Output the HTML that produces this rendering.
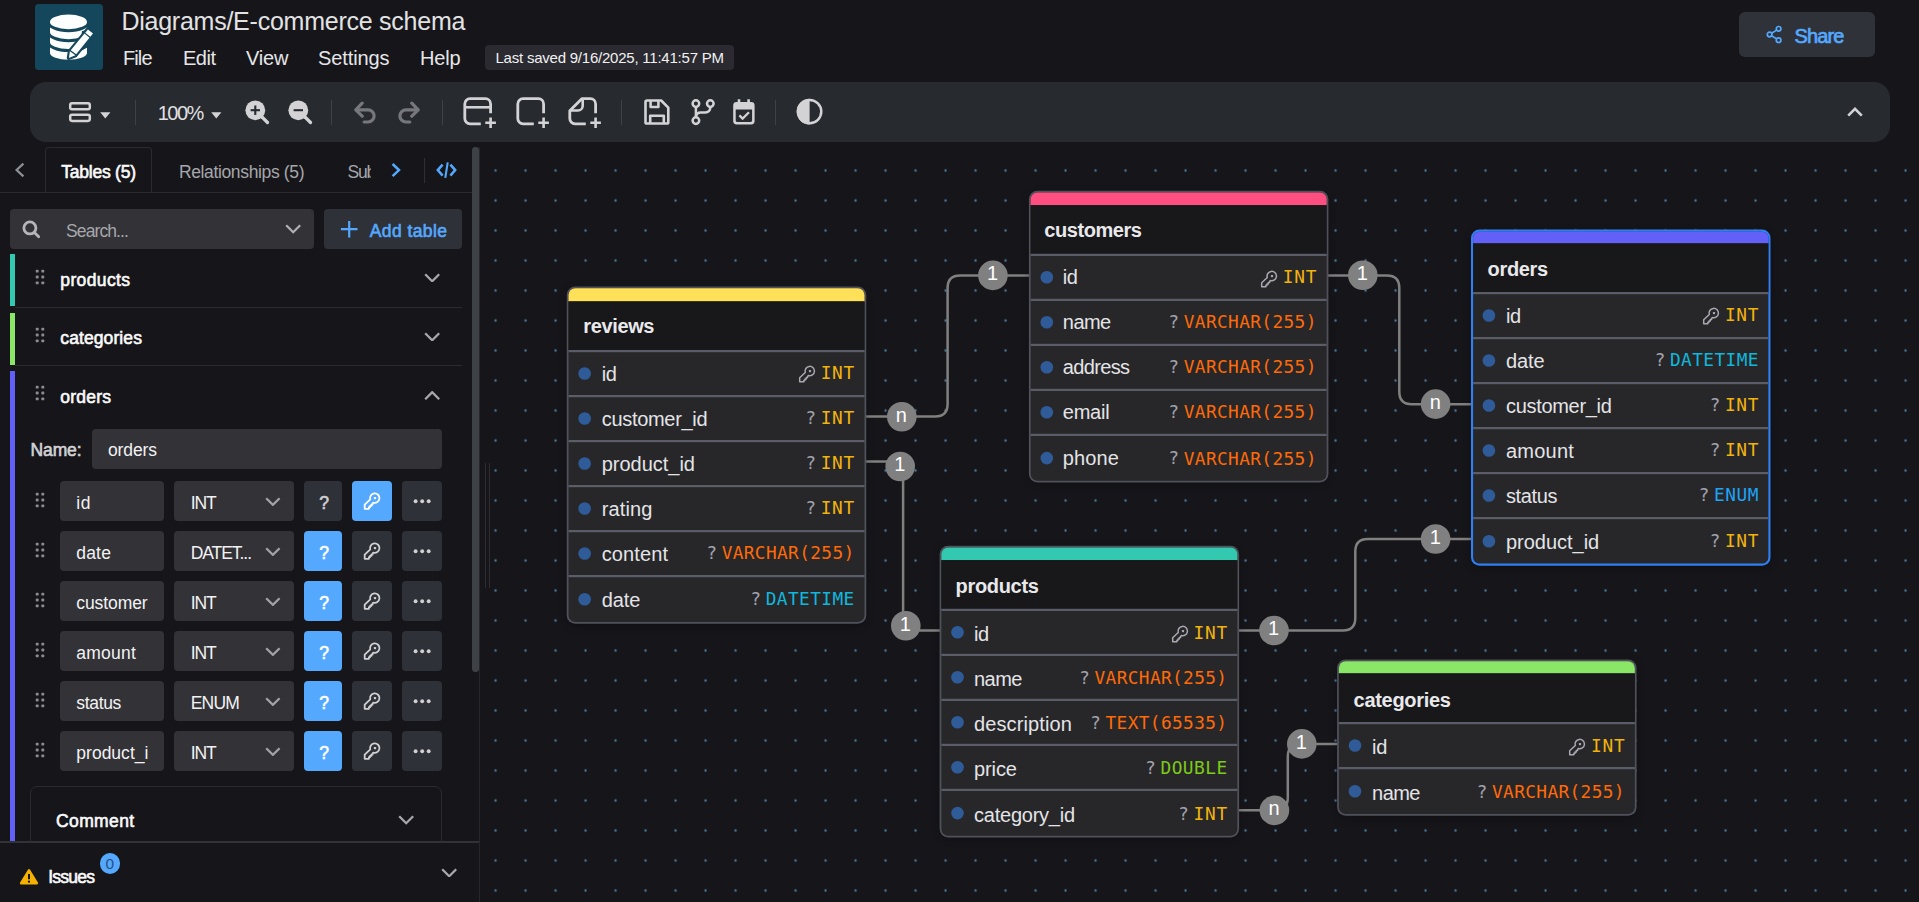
<!DOCTYPE html>
<html lang="en"><head><meta charset="utf-8"><title>drawDB - E-commerce schema</title>
<style>
html,body{margin:0;padding:0;}
body{width:1919px;height:902px;overflow:hidden;background:#16161a;position:relative;font-family:"Liberation Sans",sans-serif;color:#e8e8ea;}
.t{position:absolute;white-space:nowrap;display:block;}
.b{position:absolute;display:block;box-sizing:border-box;}
.m{font-family:"DejaVu Sans Mono","Liberation Mono",monospace;}

</style></head>
<body>
<main>
<svg class="b" style="left:0;top:0" width="1919" height="902" viewBox="0 0 1919 902"><defs><pattern id="dots" x="480.55" y="155.55" width="30" height="30" patternUnits="userSpaceOnUse"><circle cx="15" cy="15" r="1.15" fill="#4f83ab"/></pattern></defs><rect x="480.6" y="147" width="1438.4" height="755" fill="url(#dots)"/><path d="M866.00 416.40 H935.10 Q947.60 416.40 947.60 403.90 V287.90 Q947.60 275.40 960.10 275.40 H1029.50" fill="none" stroke="#808080" stroke-width="2.5"/><path d="M1328.00 275.40 H1386.80 Q1399.30 275.40 1399.30 287.90 V391.70 Q1399.30 404.20 1411.80 404.20 H1472.00" fill="none" stroke="#808080" stroke-width="2.5"/><path d="M866.00 461.40 H890.60 Q903.10 461.40 903.10 473.90 V618.00 Q903.10 630.50 915.60 630.50 H941.00" fill="none" stroke="#808080" stroke-width="2.5"/><path d="M1239.00 630.50 H1342.80 Q1355.30 630.50 1355.30 618.00 V551.50 Q1355.30 539.00 1367.80 539.00 H1472.00" fill="none" stroke="#808080" stroke-width="2.5"/><path d="M1239.00 810.20 H1275.30 Q1287.80 810.20 1287.80 797.70 V756.60 Q1287.80 744.10 1300.30 744.10 H1338.00" fill="none" stroke="#808080" stroke-width="2.5"/><circle cx="901.80" cy="416.80" r="14.8" fill="#808080"/><text x="901.40" y="421.60" text-anchor="middle" font-size="20" fill="#ffffff" font-family="Liberation Sans, sans-serif">n</text><circle cx="992.90" cy="275.40" r="14.8" fill="#808080"/><text x="992.50" y="280.20" text-anchor="middle" font-size="20" fill="#ffffff" font-family="Liberation Sans, sans-serif">1</text><circle cx="1362.80" cy="275.20" r="14.8" fill="#808080"/><text x="1362.40" y="280.00" text-anchor="middle" font-size="20" fill="#ffffff" font-family="Liberation Sans, sans-serif">1</text><circle cx="1435.60" cy="404.10" r="14.8" fill="#808080"/><text x="1435.20" y="408.90" text-anchor="middle" font-size="20" fill="#ffffff" font-family="Liberation Sans, sans-serif">n</text><circle cx="900.20" cy="466.50" r="14.8" fill="#808080"/><text x="899.80" y="471.30" text-anchor="middle" font-size="20" fill="#ffffff" font-family="Liberation Sans, sans-serif">1</text><circle cx="905.80" cy="625.80" r="14.8" fill="#808080"/><text x="905.40" y="630.60" text-anchor="middle" font-size="20" fill="#ffffff" font-family="Liberation Sans, sans-serif">1</text><circle cx="1274.00" cy="630.50" r="14.8" fill="#808080"/><text x="1273.60" y="635.30" text-anchor="middle" font-size="20" fill="#ffffff" font-family="Liberation Sans, sans-serif">1</text><circle cx="1435.60" cy="539.00" r="14.8" fill="#808080"/><text x="1435.20" y="543.80" text-anchor="middle" font-size="20" fill="#ffffff" font-family="Liberation Sans, sans-serif">1</text><circle cx="1274.40" cy="810.40" r="14.8" fill="#808080"/><text x="1274.00" y="815.20" text-anchor="middle" font-size="20" fill="#ffffff" font-family="Liberation Sans, sans-serif">n</text><circle cx="1301.80" cy="743.90" r="14.8" fill="#808080"/><text x="1301.40" y="748.70" text-anchor="middle" font-size="20" fill="#ffffff" font-family="Liberation Sans, sans-serif">1</text></svg>
<div class="b" style="left:567.75px;top:287.50px;width:297.50px;height:335.20px;border-radius:8.5px;box-shadow:0 2px 8px rgba(0,0,0,.35);"></div>
<svg class="b" style="left:564.00px;top:284.00px;" width="306" height="344" viewBox="0 0 306 344"><defs><clipPath id="c566"><rect x="4.50" y="4.25" width="296.00" height="333.70" rx="6.75"/></clipPath></defs><rect x="2.75" y="2.50" width="299.50" height="337.20" rx="8.5" fill="#50515b"/><g clip-path="url(#c566)"><rect x="2.75" y="2.50" width="299.50" height="337.20" fill="#27272a"/><rect x="2.75" y="2.50" width="299.50" height="15.00" fill="#ffe159"/><rect x="2.75" y="17.30" width="299.50" height="48.7" fill="#18181b"/><rect x="2.75" y="66.00" width="299.50" height="2.2" fill="#5a5d68"/><rect x="2.75" y="111.00" width="299.50" height="2.2" fill="#5a5d68"/><rect x="2.75" y="156.00" width="299.50" height="2.2" fill="#5a5d68"/><rect x="2.75" y="201.00" width="299.50" height="2.2" fill="#5a5d68"/><rect x="2.75" y="246.00" width="299.50" height="2.2" fill="#5a5d68"/><rect x="2.75" y="291.00" width="299.50" height="2.2" fill="#5a5d68"/></g><circle cx="20.65" cy="89.50" r="6.3" fill="#2f5c98"/><circle cx="20.65" cy="134.50" r="6.3" fill="#2f5c98"/><circle cx="20.65" cy="179.50" r="6.3" fill="#2f5c98"/><circle cx="20.65" cy="224.50" r="6.3" fill="#2f5c98"/><circle cx="20.65" cy="269.50" r="6.3" fill="#2f5c98"/><circle cx="20.65" cy="315.30" r="6.3" fill="#2f5c98"/></svg>
<span class="t " style="left:583.25px;top:312.07px;height:28px;line-height:28px;font-size:20.00px;color:#e9e9ec;font-weight:700;letter-spacing:-0.365px;">reviews</span>
<span class="t " style="left:601.75px;top:359.67px;height:28px;line-height:28px;font-size:20.00px;color:#e4e4e7;letter-spacing:-0.367px;">id</span>
<span class="t  m" style="left:820.65px;top:359.84px;height:25px;line-height:25px;font-size:17.80px;color:#f2b40a;letter-spacing:0.774px;">INT</span>
<svg class="b" style="left:797.05px;top:364.00px;" width="20" height="20" viewBox="0 0 20 20"><g fill="none" stroke="#a9a9b1" stroke-width="1.5" stroke-linejoin="round"><path d="M8.26 8.44 A4.7 4.7 0 1 1 11.38 11.56 L10.600 12.400 V13.600 H9.300 V14.900 H8 V16.200 H6.900 V17.800 H2.700 V13.700 Z"/><rect x="11.900" y="5.950" width="2.200" height="2.200" rx="0.600" fill="#a9a9b1" stroke="none"/></g></svg>
<span class="t " style="left:601.75px;top:404.67px;height:28px;line-height:28px;font-size:20.00px;color:#e4e4e7;letter-spacing:-0.314px;">customer_id</span>
<span class="t  m" style="left:820.65px;top:404.84px;height:25px;line-height:25px;font-size:17.80px;color:#f2b40a;letter-spacing:0.774px;">INT</span>
<span class="t  m" style="left:805.15px;top:404.57px;height:25px;line-height:25px;font-size:18.00px;color:#a1a1aa;">?</span>
<span class="t " style="left:601.75px;top:449.67px;height:28px;line-height:28px;font-size:20.00px;color:#e4e4e7;letter-spacing:-0.022px;">product_id</span>
<span class="t  m" style="left:820.65px;top:449.84px;height:25px;line-height:25px;font-size:17.80px;color:#f2b40a;letter-spacing:0.774px;">INT</span>
<span class="t  m" style="left:805.15px;top:449.57px;height:25px;line-height:25px;font-size:18.00px;color:#a1a1aa;">?</span>
<span class="t " style="left:601.75px;top:494.67px;height:28px;line-height:28px;font-size:20.00px;color:#e4e4e7;letter-spacing:0.114px;">rating</span>
<span class="t  m" style="left:820.65px;top:494.84px;height:25px;line-height:25px;font-size:17.80px;color:#f2b40a;letter-spacing:0.774px;">INT</span>
<span class="t  m" style="left:805.15px;top:494.57px;height:25px;line-height:25px;font-size:18.00px;color:#a1a1aa;">?</span>
<span class="t " style="left:601.75px;top:539.67px;height:28px;line-height:28px;font-size:20.00px;color:#e4e4e7;letter-spacing:0.099px;">content</span>
<span class="t  m" style="left:721.65px;top:539.84px;height:25px;line-height:25px;font-size:17.80px;color:#ff6a06;letter-spacing:0.372px;">VARCHAR(255)</span>
<span class="t  m" style="left:706.15px;top:539.57px;height:25px;line-height:25px;font-size:18.00px;color:#a1a1aa;">?</span>
<span class="t " style="left:601.75px;top:585.87px;height:28px;line-height:28px;font-size:20.00px;color:#e4e4e7;letter-spacing:-0.142px;">date</span>
<span class="t  m" style="left:765.65px;top:586.04px;height:25px;line-height:25px;font-size:17.80px;color:#10b7dc;letter-spacing:0.423px;">DATETIME</span>
<span class="t  m" style="left:750.15px;top:585.77px;height:25px;line-height:25px;font-size:18.00px;color:#a1a1aa;">?</span>
<div class="b" style="left:1029.90px;top:191.80px;width:297.50px;height:289.70px;border-radius:8.5px;box-shadow:0 2px 8px rgba(0,0,0,.35);"></div>
<svg class="b" style="left:1026.00px;top:188.00px;" width="306" height="298" viewBox="0 0 306 298"><defs><clipPath id="c1028"><rect x="4.65" y="4.55" width="296.00" height="288.20" rx="6.75"/></clipPath></defs><rect x="2.90" y="2.80" width="299.50" height="291.70" rx="8.5" fill="#50515b"/><g clip-path="url(#c1028)"><rect x="2.90" y="2.80" width="299.50" height="291.70" fill="#27272a"/><rect x="2.90" y="2.80" width="299.50" height="14.50" fill="#ff4f81"/><rect x="2.90" y="17.10" width="299.50" height="48.7" fill="#18181b"/><rect x="2.90" y="65.80" width="299.50" height="2.2" fill="#5a5d68"/><rect x="2.90" y="110.80" width="299.50" height="2.2" fill="#5a5d68"/><rect x="2.90" y="155.80" width="299.50" height="2.2" fill="#5a5d68"/><rect x="2.90" y="200.80" width="299.50" height="2.2" fill="#5a5d68"/><rect x="2.90" y="245.80" width="299.50" height="2.2" fill="#5a5d68"/></g><circle cx="20.80" cy="89.30" r="6.3" fill="#2f5c98"/><circle cx="20.80" cy="134.30" r="6.3" fill="#2f5c98"/><circle cx="20.80" cy="179.30" r="6.3" fill="#2f5c98"/><circle cx="20.80" cy="224.30" r="6.3" fill="#2f5c98"/><circle cx="20.80" cy="270.10" r="6.3" fill="#2f5c98"/></svg>
<span class="t " style="left:1044.30px;top:215.71px;height:28px;line-height:28px;font-size:20.00px;color:#e9e9ec;font-weight:700;letter-spacing:-0.432px;">customers</span>
<span class="t " style="left:1062.80px;top:263.27px;height:28px;line-height:28px;font-size:20.00px;color:#e4e4e7;letter-spacing:-0.367px;">id</span>
<span class="t  m" style="left:1282.80px;top:264.34px;height:25px;line-height:25px;font-size:17.80px;color:#f2b40a;letter-spacing:0.774px;">INT</span>
<svg class="b" style="left:1259.20px;top:268.50px;" width="20" height="20" viewBox="0 0 20 20"><g fill="none" stroke="#a9a9b1" stroke-width="1.5" stroke-linejoin="round"><path d="M8.26 8.44 A4.7 4.7 0 1 1 11.38 11.56 L10.600 12.400 V13.600 H9.300 V14.900 H8 V16.200 H6.900 V17.800 H2.700 V13.700 Z"/><rect x="11.900" y="5.950" width="2.200" height="2.200" rx="0.600" fill="#a9a9b1" stroke="none"/></g></svg>
<span class="t " style="left:1062.80px;top:308.27px;height:28px;line-height:28px;font-size:20.00px;color:#e4e4e7;letter-spacing:-0.544px;">name</span>
<span class="t  m" style="left:1183.80px;top:309.34px;height:25px;line-height:25px;font-size:17.80px;color:#ff6a06;letter-spacing:0.372px;">VARCHAR(255)</span>
<span class="t  m" style="left:1168.30px;top:309.07px;height:25px;line-height:25px;font-size:18.00px;color:#a1a1aa;">?</span>
<span class="t " style="left:1062.80px;top:353.27px;height:28px;line-height:28px;font-size:20.00px;color:#e4e4e7;letter-spacing:-0.642px;">address</span>
<span class="t  m" style="left:1183.80px;top:354.34px;height:25px;line-height:25px;font-size:17.80px;color:#ff6a06;letter-spacing:0.372px;">VARCHAR(255)</span>
<span class="t  m" style="left:1168.30px;top:354.07px;height:25px;line-height:25px;font-size:18.00px;color:#a1a1aa;">?</span>
<span class="t " style="left:1062.80px;top:398.27px;height:28px;line-height:28px;font-size:20.00px;color:#e4e4e7;letter-spacing:-0.249px;">email</span>
<span class="t  m" style="left:1183.80px;top:399.34px;height:25px;line-height:25px;font-size:17.80px;color:#ff6a06;letter-spacing:0.372px;">VARCHAR(255)</span>
<span class="t  m" style="left:1168.30px;top:399.07px;height:25px;line-height:25px;font-size:18.00px;color:#a1a1aa;">?</span>
<span class="t " style="left:1062.80px;top:444.47px;height:28px;line-height:28px;font-size:20.00px;color:#e4e4e7;letter-spacing:0.096px;">phone</span>
<span class="t  m" style="left:1183.80px;top:445.54px;height:25px;line-height:25px;font-size:17.80px;color:#ff6a06;letter-spacing:0.372px;">VARCHAR(255)</span>
<span class="t  m" style="left:1168.30px;top:445.27px;height:25px;line-height:25px;font-size:18.00px;color:#a1a1aa;">?</span>
<div class="b" style="left:1472.00px;top:230.60px;width:297.50px;height:334.10px;border-radius:8.5px;box-shadow:0 2px 8px rgba(0,0,0,.35);"></div>
<svg class="b" style="left:1469.00px;top:227.00px;" width="306" height="343" viewBox="0 0 306 343"><defs><clipPath id="c1471"><rect x="4.10" y="4.70" width="295.30" height="331.90" rx="6.40"/></clipPath></defs><rect x="2.00" y="2.60" width="299.50" height="336.10" rx="8.5" fill="#2f7ff6"/><g clip-path="url(#c1471)"><rect x="2.00" y="2.60" width="299.50" height="336.10" fill="#27272a"/><rect x="2.00" y="2.60" width="299.50" height="13.90" fill="#6360f7"/><rect x="2.00" y="16.30" width="299.50" height="48.7" fill="#18181b"/><rect x="2.00" y="65.00" width="299.50" height="2.2" fill="#5a5d68"/><rect x="2.00" y="110.00" width="299.50" height="2.2" fill="#5a5d68"/><rect x="2.00" y="155.00" width="299.50" height="2.2" fill="#5a5d68"/><rect x="2.00" y="200.00" width="299.50" height="2.2" fill="#5a5d68"/><rect x="2.00" y="245.00" width="299.50" height="2.2" fill="#5a5d68"/><rect x="2.00" y="290.00" width="299.50" height="2.2" fill="#5a5d68"/></g><circle cx="19.90" cy="88.50" r="6.3" fill="#2f5c98"/><circle cx="19.90" cy="133.50" r="6.3" fill="#2f5c98"/><circle cx="19.90" cy="178.50" r="6.3" fill="#2f5c98"/><circle cx="19.90" cy="223.50" r="6.3" fill="#2f5c98"/><circle cx="19.90" cy="268.50" r="6.3" fill="#2f5c98"/><circle cx="19.90" cy="314.30" r="6.3" fill="#2f5c98"/></svg>
<span class="t " style="left:1487.50px;top:255.13px;height:28px;line-height:28px;font-size:20.00px;color:#e9e9ec;font-weight:700;letter-spacing:-0.309px;">orders</span>
<span class="t " style="left:1506.00px;top:301.87px;height:28px;line-height:28px;font-size:20.00px;color:#e4e4e7;letter-spacing:-0.367px;">id</span>
<span class="t  m" style="left:1724.90px;top:302.04px;height:25px;line-height:25px;font-size:17.80px;color:#f2b40a;letter-spacing:0.774px;">INT</span>
<svg class="b" style="left:1701.30px;top:306.20px;" width="20" height="20" viewBox="0 0 20 20"><g fill="none" stroke="#a9a9b1" stroke-width="1.5" stroke-linejoin="round"><path d="M8.26 8.44 A4.7 4.7 0 1 1 11.38 11.56 L10.600 12.400 V13.600 H9.300 V14.900 H8 V16.200 H6.900 V17.800 H2.700 V13.700 Z"/><rect x="11.900" y="5.950" width="2.200" height="2.200" rx="0.600" fill="#a9a9b1" stroke="none"/></g></svg>
<span class="t " style="left:1506.00px;top:346.87px;height:28px;line-height:28px;font-size:20.00px;color:#e4e4e7;letter-spacing:-0.142px;">date</span>
<span class="t  m" style="left:1669.90px;top:347.04px;height:25px;line-height:25px;font-size:17.80px;color:#10b7dc;letter-spacing:0.423px;">DATETIME</span>
<span class="t  m" style="left:1654.40px;top:346.77px;height:25px;line-height:25px;font-size:18.00px;color:#a1a1aa;">?</span>
<span class="t " style="left:1506.00px;top:391.87px;height:28px;line-height:28px;font-size:20.00px;color:#e4e4e7;letter-spacing:-0.314px;">customer_id</span>
<span class="t  m" style="left:1724.90px;top:392.04px;height:25px;line-height:25px;font-size:17.80px;color:#f2b40a;letter-spacing:0.774px;">INT</span>
<span class="t  m" style="left:1709.40px;top:391.77px;height:25px;line-height:25px;font-size:18.00px;color:#a1a1aa;">?</span>
<span class="t " style="left:1506.00px;top:436.87px;height:28px;line-height:28px;font-size:20.00px;color:#e4e4e7;letter-spacing:0.218px;">amount</span>
<span class="t  m" style="left:1724.90px;top:437.04px;height:25px;line-height:25px;font-size:17.80px;color:#f2b40a;letter-spacing:0.774px;">INT</span>
<span class="t  m" style="left:1709.40px;top:436.77px;height:25px;line-height:25px;font-size:18.00px;color:#a1a1aa;">?</span>
<span class="t " style="left:1506.00px;top:481.87px;height:28px;line-height:28px;font-size:20.00px;color:#e4e4e7;letter-spacing:-0.392px;">status</span>
<span class="t  m" style="left:1713.90px;top:482.04px;height:25px;line-height:25px;font-size:17.80px;color:#1da4f4;letter-spacing:0.610px;">ENUM</span>
<span class="t  m" style="left:1698.40px;top:481.77px;height:25px;line-height:25px;font-size:18.00px;color:#a1a1aa;">?</span>
<span class="t " style="left:1506.00px;top:528.07px;height:28px;line-height:28px;font-size:20.00px;color:#e4e4e7;letter-spacing:-0.022px;">product_id</span>
<span class="t  m" style="left:1724.90px;top:528.24px;height:25px;line-height:25px;font-size:17.80px;color:#f2b40a;letter-spacing:0.774px;">INT</span>
<span class="t  m" style="left:1709.40px;top:527.97px;height:25px;line-height:25px;font-size:18.00px;color:#a1a1aa;">?</span>
<div class="b" style="left:940.60px;top:546.80px;width:297.50px;height:289.70px;border-radius:8.5px;box-shadow:0 2px 8px rgba(0,0,0,.35);"></div>
<svg class="b" style="left:937.00px;top:543.00px;" width="306" height="298" viewBox="0 0 306 298"><defs><clipPath id="c939"><rect x="4.35" y="4.55" width="296.00" height="288.20" rx="6.75"/></clipPath></defs><rect x="2.60" y="2.80" width="299.50" height="291.70" rx="8.5" fill="#50515b"/><g clip-path="url(#c939)"><rect x="2.60" y="2.80" width="299.50" height="291.70" fill="#27272a"/><rect x="2.60" y="2.80" width="299.50" height="14.50" fill="#32c9b0"/><rect x="2.60" y="17.10" width="299.50" height="48.7" fill="#18181b"/><rect x="2.60" y="65.80" width="299.50" height="2.2" fill="#5a5d68"/><rect x="2.60" y="110.80" width="299.50" height="2.2" fill="#5a5d68"/><rect x="2.60" y="155.80" width="299.50" height="2.2" fill="#5a5d68"/><rect x="2.60" y="200.80" width="299.50" height="2.2" fill="#5a5d68"/><rect x="2.60" y="245.80" width="299.50" height="2.2" fill="#5a5d68"/></g><circle cx="20.50" cy="89.30" r="6.3" fill="#2f5c98"/><circle cx="20.50" cy="134.30" r="6.3" fill="#2f5c98"/><circle cx="20.50" cy="179.30" r="6.3" fill="#2f5c98"/><circle cx="20.50" cy="224.30" r="6.3" fill="#2f5c98"/><circle cx="20.50" cy="270.10" r="6.3" fill="#2f5c98"/></svg>
<span class="t " style="left:955.50px;top:572.23px;height:28px;line-height:28px;font-size:20.00px;color:#e9e9ec;font-weight:700;letter-spacing:-0.308px;">products</span>
<span class="t " style="left:974.00px;top:620.17px;height:28px;line-height:28px;font-size:20.00px;color:#e4e4e7;letter-spacing:-0.367px;">id</span>
<span class="t  m" style="left:1193.50px;top:620.04px;height:25px;line-height:25px;font-size:17.80px;color:#f2b40a;letter-spacing:0.774px;">INT</span>
<svg class="b" style="left:1169.90px;top:624.20px;" width="20" height="20" viewBox="0 0 20 20"><g fill="none" stroke="#a9a9b1" stroke-width="1.5" stroke-linejoin="round"><path d="M8.26 8.44 A4.7 4.7 0 1 1 11.38 11.56 L10.600 12.400 V13.600 H9.300 V14.900 H8 V16.200 H6.900 V17.800 H2.700 V13.700 Z"/><rect x="11.900" y="5.950" width="2.200" height="2.200" rx="0.600" fill="#a9a9b1" stroke="none"/></g></svg>
<span class="t " style="left:974.00px;top:665.17px;height:28px;line-height:28px;font-size:20.00px;color:#e4e4e7;letter-spacing:-0.544px;">name</span>
<span class="t  m" style="left:1094.50px;top:665.04px;height:25px;line-height:25px;font-size:17.80px;color:#ff6a06;letter-spacing:0.372px;">VARCHAR(255)</span>
<span class="t  m" style="left:1079.00px;top:664.77px;height:25px;line-height:25px;font-size:18.00px;color:#a1a1aa;">?</span>
<span class="t " style="left:974.00px;top:710.17px;height:28px;line-height:28px;font-size:20.00px;color:#e4e4e7;letter-spacing:0.108px;">description</span>
<span class="t  m" style="left:1105.50px;top:710.04px;height:25px;line-height:25px;font-size:17.80px;color:#ff6a06;letter-spacing:0.381px;">TEXT(65535)</span>
<span class="t  m" style="left:1090.00px;top:709.77px;height:25px;line-height:25px;font-size:18.00px;color:#a1a1aa;">?</span>
<span class="t " style="left:974.00px;top:755.17px;height:28px;line-height:28px;font-size:20.00px;color:#e4e4e7;letter-spacing:-0.088px;">price</span>
<span class="t  m" style="left:1160.50px;top:755.04px;height:25px;line-height:25px;font-size:17.80px;color:#7dca18;letter-spacing:0.479px;">DOUBLE</span>
<span class="t  m" style="left:1145.00px;top:754.77px;height:25px;line-height:25px;font-size:18.00px;color:#a1a1aa;">?</span>
<span class="t " style="left:974.00px;top:801.37px;height:28px;line-height:28px;font-size:20.00px;color:#e4e4e7;letter-spacing:-0.230px;">category_id</span>
<span class="t  m" style="left:1193.50px;top:801.24px;height:25px;line-height:25px;font-size:17.80px;color:#f2b40a;letter-spacing:0.774px;">INT</span>
<span class="t  m" style="left:1178.00px;top:800.97px;height:25px;line-height:25px;font-size:18.00px;color:#a1a1aa;">?</span>
<div class="b" style="left:1338.10px;top:660.60px;width:297.50px;height:154.10px;border-radius:8.5px;box-shadow:0 2px 8px rgba(0,0,0,.35);"></div>
<svg class="b" style="left:1335.00px;top:657.00px;" width="306" height="163" viewBox="0 0 306 163"><defs><clipPath id="c1337"><rect x="3.85" y="4.35" width="296.00" height="152.60" rx="6.75"/></clipPath></defs><rect x="2.10" y="2.60" width="299.50" height="156.10" rx="8.5" fill="#50515b"/><g clip-path="url(#c1337)"><rect x="2.10" y="2.60" width="299.50" height="156.10" fill="#27272a"/><rect x="2.10" y="2.60" width="299.50" height="13.90" fill="#89e667"/><rect x="2.10" y="16.30" width="299.50" height="48.7" fill="#18181b"/><rect x="2.10" y="65.00" width="299.50" height="2.2" fill="#5a5d68"/><rect x="2.10" y="110.00" width="299.50" height="2.2" fill="#5a5d68"/></g><circle cx="20.00" cy="88.50" r="6.3" fill="#2f5c98"/><circle cx="20.00" cy="134.30" r="6.3" fill="#2f5c98"/></svg>
<span class="t " style="left:1353.60px;top:685.73px;height:28px;line-height:28px;font-size:20.00px;color:#e9e9ec;font-weight:700;letter-spacing:-0.306px;">categories</span>
<span class="t " style="left:1372.10px;top:732.87px;height:28px;line-height:28px;font-size:20.00px;color:#e4e4e7;letter-spacing:-0.367px;">id</span>
<span class="t  m" style="left:1591.00px;top:733.04px;height:25px;line-height:25px;font-size:17.80px;color:#f2b40a;letter-spacing:0.774px;">INT</span>
<svg class="b" style="left:1567.40px;top:737.20px;" width="20" height="20" viewBox="0 0 20 20"><g fill="none" stroke="#a9a9b1" stroke-width="1.5" stroke-linejoin="round"><path d="M8.26 8.44 A4.7 4.7 0 1 1 11.38 11.56 L10.600 12.400 V13.600 H9.300 V14.900 H8 V16.200 H6.900 V17.800 H2.700 V13.700 Z"/><rect x="11.900" y="5.950" width="2.200" height="2.200" rx="0.600" fill="#a9a9b1" stroke="none"/></g></svg>
<span class="t " style="left:1372.10px;top:779.07px;height:28px;line-height:28px;font-size:20.00px;color:#e4e4e7;letter-spacing:-0.544px;">name</span>
<span class="t  m" style="left:1492.00px;top:779.24px;height:25px;line-height:25px;font-size:17.80px;color:#ff6a06;letter-spacing:0.372px;">VARCHAR(255)</span>
<span class="t  m" style="left:1476.50px;top:778.97px;height:25px;line-height:25px;font-size:18.00px;color:#a1a1aa;">?</span>
</main>
<header>
<div class="b" style="left:35.00px;top:3.70px;width:68.20px;height:66.30px;background:#14475b;border-radius:3.5px;"></div>
<svg class="b" style="left:35.00px;top:3.70px;" width="68.2" height="66.3" viewBox="0 0 68.2 66.3">
<g fill="#fdfefe">
<path d="M15 18 V49 A18.5 6.8 0 0 0 52 49 V18 Z"/>
<ellipse cx="33.5" cy="17.8" rx="18.5" ry="7.2"/>
</g>
<g fill="none" stroke="#14475b" stroke-width="3">
<path d="M13.5 18.25 A20 8.4 0 0 0 53.5 18.25"/>
<path d="M13.5 28.25 A20 8.4 0 0 0 53.5 28.25"/>
<path d="M13.5 38.15 A20 8.4 0 0 0 53.5 38.15"/>
</g>
<path d="M47 27 L53.5 26 V42.600 L45 47.5 Z" fill="#14475b"/>
<g stroke="#14475b" stroke-width="4.2" fill="#14475b" stroke-linejoin="round">
<path d="M35.7 46.3 L49.5 29.600 L54.5 33.800 L41.2 50.300 Z"/>
<path d="M50.240 28.700 L52.960 25.400 L58 29.500 L55.300 32.800 Z"/>
<path d="M34.900 47.200 L40.400 51.200 L33.900 53.900 Z"/>
</g>
<g fill="#fdfefe">
<path d="M35.7 46.3 L49.5 29.600 L54.5 33.800 L41.2 50.300 Z"/>
<path d="M50.240 28.700 L52.960 25.400 L58 29.500 L55.300 32.800 Z"/>
<path d="M34.900 47.200 L40.400 51.200 L33.900 53.900 Z"/>
</g>
</svg>
<span class="t " style="left:121.40px;top:4.00px;height:35px;line-height:35px;font-size:25.00px;color:#e2e2e4;letter-spacing:-0.243px;">Diagrams/E-commerce schema</span>
<span class="t " style="left:123.00px;top:44.00px;height:28px;line-height:28px;font-size:20.00px;color:#e6e6e8;letter-spacing:-0.909px;">File</span>
<span class="t " style="left:183.00px;top:44.00px;height:28px;line-height:28px;font-size:20.00px;color:#e6e6e8;letter-spacing:-0.488px;">Edit</span>
<span class="t " style="left:246.00px;top:44.00px;height:28px;line-height:28px;font-size:20.00px;color:#e6e6e8;letter-spacing:-0.164px;">View</span>
<span class="t " style="left:318.00px;top:44.00px;height:28px;line-height:28px;font-size:20.00px;color:#e6e6e8;letter-spacing:-0.110px;">Settings</span>
<span class="t " style="left:420.00px;top:44.00px;height:28px;line-height:28px;font-size:20.00px;color:#e6e6e8;letter-spacing:-0.211px;">Help</span>
<div class="b" style="left:485.00px;top:45.00px;width:248.50px;height:25.00px;background:#2a2a30;border-radius:4.0px;"></div>
<span class="t " style="left:495.50px;top:47.10px;height:21px;line-height:21px;font-size:15.00px;color:#f1f1f2;letter-spacing:-0.226px;">Last saved 9/16/2025, 11:41:57 PM</span>
<div class="b" style="left:1739.00px;top:12.00px;width:136.00px;height:45.00px;background:#303239;border-radius:6.0px;"></div>
<svg class="b" style="left:1765.60px;top:25.10px;" width="17" height="19" viewBox="0 0 17 19"><g fill="none" stroke="#54a9ff" stroke-width="1.7">
<circle cx="12.6" cy="3.8" r="2.3"/><circle cx="3.6" cy="9.5" r="2.3"/><circle cx="12.6" cy="15.2" r="2.3"/>
<path d="M5.6 8.3 L10.6 5.1 M5.6 10.7 L10.6 13.9"/></g></svg>
<span class="t " style="left:1794.50px;top:21.60px;height:28px;line-height:28px;font-size:20.00px;color:#54a9ff;-webkit-text-stroke:0.68px #54a9ff;letter-spacing:-0.843px;">Share</span>
<div class="b" style="left:30.00px;top:82.00px;width:1860.00px;height:60.00px;background:#272a2f;border-radius:16.0px;"></div>
<div class="b" style="left:134.80px;top:100.00px;width:1.30px;height:25.00px;background:rgba(255,255,255,0.11);border-radius:0.0px;"></div>
<div class="b" style="left:330.80px;top:100.00px;width:1.30px;height:25.00px;background:rgba(255,255,255,0.11);border-radius:0.0px;"></div>
<div class="b" style="left:441.70px;top:100.00px;width:1.30px;height:25.00px;background:rgba(255,255,255,0.11);border-radius:0.0px;"></div>
<div class="b" style="left:620.90px;top:100.00px;width:1.30px;height:25.00px;background:rgba(255,255,255,0.11);border-radius:0.0px;"></div>
<div class="b" style="left:774.70px;top:100.00px;width:1.30px;height:25.00px;background:rgba(255,255,255,0.11);border-radius:0.0px;"></div>
<svg class="b" style="left:66.00px;top:99.00px;" width="28" height="26" viewBox="0 0 28 26"><g fill="none" stroke="#d3d3d6" stroke-width="2.5"><rect x="4.2" y="4.2" width="19.6" height="6.1" rx="1.8"/><rect x="4.2" y="15.8" width="19.6" height="6.1" rx="1.8"/></g></svg>
<svg class="b" style="left:100.00px;top:111.60px;" width="11" height="7" viewBox="0 0 11 7"><path d="M0.2 0.2 H10.4 L5.3 6.6 Z" fill="#d3d3d6"/></svg>
<svg class="b" style="left:210.80px;top:111.60px;" width="11" height="7" viewBox="0 0 11 7"><path d="M0.2 0.2 H10.4 L5.3 6.6 Z" fill="#d3d3d6"/></svg>
<span class="t " style="left:157.70px;top:99.20px;height:28px;line-height:28px;font-size:20.00px;color:#e0e0e3;letter-spacing:-1.484px;">100%</span>
<svg class="b" style="left:245.00px;top:100.00px;" width="26" height="26" viewBox="0 0 26 26"><circle cx="10.3" cy="10.3" r="9.9" fill="#d3d3d6"/><path d="M17 17 L22.500 22.500" stroke="#d3d3d6" stroke-width="3.2" stroke-linecap="round"/><path d="M5.6 10.2 H15" stroke="#272a2f" stroke-width="2.1"/><path d="M10.3 5.5 V14.9" stroke="#272a2f" stroke-width="2.1"/></svg>
<svg class="b" style="left:287.70px;top:100.00px;" width="26" height="26" viewBox="0 0 26 26"><circle cx="10.3" cy="10.3" r="9.9" fill="#d3d3d6"/><path d="M17 17 L22.500 22.500" stroke="#d3d3d6" stroke-width="3.2" stroke-linecap="round"/><path d="M5.6 10.2 H15" stroke="#272a2f" stroke-width="2.1"/></svg>
<svg class="b" style="left:353.60px;top:100.50px;" width="24" height="24" viewBox="0 0 24 24"><g fill="none" stroke="#77787d" stroke-width="3.2" stroke-linecap="round" stroke-linejoin="round"><path d="M8.2 2.2 L1.8 8.8 L8.2 15.2"/><path d="M2.5 8.8 H14 A6.1 6.1 0 0 1 14 21 H10.2"/></g></svg>
<svg class="b" style="left:396.20px;top:100.50px;" width="24" height="24" viewBox="0 0 24 24"><g transform="translate(24,0) scale(-1,1)"><g fill="none" stroke="#77787d" stroke-width="3.2" stroke-linecap="round" stroke-linejoin="round"><path d="M8.2 2.2 L1.8 8.8 L8.2 15.2"/><path d="M2.5 8.8 H14 A6.1 6.1 0 0 1 14 21 H10.2"/></g></g></svg>
<svg class="b" style="left:461.70px;top:95.70px;" width="36" height="34" viewBox="0 0 36 34"><path d="M18.8 27.8 H8 A5.2 5.2 0 0 1 2.8 22.6 V7.9 A5.2 5.2 0 0 1 8 2.7 H23.4 A5.2 5.2 0 0 1 28.6 7.9 V17.3" fill="none" stroke="#d3d3d6" stroke-width="2.8"/><path d="M2.8 11.3 H28.6" stroke="#d3d3d6" stroke-width="2.6"/><path d="M23.3 26.7 h10.6 M28.6 21.4 v10.6" stroke="#d3d3d6" stroke-width="2.6" fill="none"/></svg>
<svg class="b" style="left:514.70px;top:95.70px;" width="36" height="34" viewBox="0 0 36 34"><path d="M18.8 27.8 H8 A5.2 5.2 0 0 1 2.8 22.6 V7.9 A5.2 5.2 0 0 1 8 2.7 H23.4 A5.2 5.2 0 0 1 28.6 7.9 V17.3" fill="none" stroke="#d3d3d6" stroke-width="2.8"/><path d="M23.3 26.7 h10.6 M28.6 21.4 v10.6" stroke="#d3d3d6" stroke-width="2.6" fill="none"/></svg>
<svg class="b" style="left:567.00px;top:95.70px;" width="36" height="34" viewBox="0 0 36 34"><path d="M18.8 27.8 H8 A5.2 5.2 0 0 1 2.8 22.6 V14.700 L14.800 2.7 H23.4 A5.2 5.2 0 0 1 28.6 7.9 V17.3" fill="none" stroke="#d3d3d6" stroke-width="2.8" stroke-linejoin="round"/><path d="M15.700 2.9 V9.7 A4.8 4.8 0 0 1 10.900 14.500 H3" fill="none" stroke="#d3d3d6" stroke-width="2.6"/><path d="M23.3 26.7 h10.6 M28.6 21.4 v10.6" stroke="#d3d3d6" stroke-width="2.6" fill="none"/></svg>
<svg class="b" style="left:644.00px;top:98.60px;" width="27" height="27" viewBox="0 0 27 27"><g fill="none" stroke="#d3d3d6" stroke-width="2.6" stroke-linejoin="round"><path d="M1.5 2.8 A1.3 1.3 0 0 1 2.8 1.5 H17.2 L24.3 8.6 V23.2 A1.3 1.3 0 0 1 23 24.5 H2.8 A1.3 1.3 0 0 1 1.5 23.2 Z"/><path d="M6.6 1.8 V8 H14.4 V1.8"/><path d="M6.2 24.2 V16.8 H19.8 V24.2"/></g></svg>
<svg class="b" style="left:690.80px;top:99.00px;" width="25" height="27" viewBox="0 0 25 27"><g fill="none" stroke="#d3d3d6" stroke-width="2.5"><circle cx="4.9" cy="4.6" r="3.3"/><circle cx="19.3" cy="4.6" r="3.3"/><circle cx="4.9" cy="21.6" r="3.3"/><path d="M4.9 8 V18.2"/><path d="M19.3 8 V8.6 A4.8 4.8 0 0 1 14.5 13.4 H9.6 A4.7 4.7 0 0 0 4.9 17"/></g></svg>
<svg class="b" style="left:732.30px;top:99.10px;" width="24" height="26" viewBox="0 0 24 26"><path d="M4.6 3 H19.2 A3.4 3.4 0 0 1 22.6 6.4 V22 A3.4 3.4 0 0 1 19.2 25.4 H4.6 A3.4 3.4 0 0 1 1.2 22 V6.4 A3.4 3.4 0 0 1 4.6 3 Z M3.7 10.4 V21.6 A1.3 1.3 0 0 0 5 22.9 H18.8 A1.3 1.3 0 0 0 20.1 21.600 V10.4 Z" fill="#d3d3d6" fill-rule="evenodd"/><path d="M7 0.2 V4 M16.6 0.2 V4" stroke="#d3d3d6" stroke-width="2.6"/><path d="M7.4 16.4 L10.6 19.6 L17 13.200" fill="none" stroke="#d3d3d6" stroke-width="2.3"/></svg>
<svg class="b" style="left:795.60px;top:98.40px;" width="28" height="28" viewBox="0 0 28 28"><circle cx="13.6" cy="13.6" r="11.7" fill="none" stroke="#d3d3d6" stroke-width="2.5"/><path d="M13.6 0.7 A12.9 12.9 0 0 0 13.6 26.5 Z" fill="#d3d3d6"/></svg>
<svg class="b" style="left:1846.00px;top:105.00px;" width="18" height="14" viewBox="0 0 18 14"><path d="M2.2 10.6 L9 3.800 L15.800 10.6" fill="none" stroke="#d3d3d6" stroke-width="2.6"/></svg>
</header>
<aside>
<div class="b" style="left:45.20px;top:147.20px;width:106.60px;height:46.00px;background:#16161a;border-radius:4.0px;border:1.2px solid #2a2a2f;border-bottom:none;border-bottom-left-radius:0;border-bottom-right-radius:0;"></div>
<div class="b" style="left:0.00px;top:192.00px;width:472.00px;height:1.20px;background:#2a2a2f;border-radius:0.0px;"></div>
<svg class="b" style="left:13.00px;top:161.00px;" width="14" height="18" viewBox="0 0 14 18"><path d="M10.4 2.6 L3.6 9 L10.4 15.400" fill="none" stroke="#8f9095" stroke-width="2.2"/></svg>
<span class="t " style="left:61.20px;top:159.84px;height:24px;line-height:24px;font-size:17.50px;color:#fafafa;-webkit-text-stroke:0.60px #fafafa;letter-spacing:-0.226px;">Tables (5)</span>
<span class="t " style="left:178.90px;top:159.84px;height:24px;line-height:24px;font-size:17.50px;color:#a6a6ab;letter-spacing:-0.357px;">Relationships (5)</span>
<div class="b" style="left:347.5px;top:158px;width:23.6px;height:28px;overflow:hidden;">
<span class="t " style="left:0.00px;top:1.84px;height:24px;line-height:24px;font-size:17.50px;color:#a6a6ab;letter-spacing:-1.2px;">Subject Areas (0)</span>
</div>
<svg class="b" style="left:390.00px;top:161.00px;" width="12" height="18" viewBox="0 0 12 18"><path d="M2.6 3 L9 9.100 L2.600 15.200" fill="none" stroke="#54a9ff" stroke-width="2.5"/></svg>
<div class="b" style="left:423.60px;top:158.00px;width:1.20px;height:25.00px;background:#2e2e33;border-radius:0.0px;"></div>
<svg class="b" style="left:435.50px;top:161.00px;" width="22" height="18" viewBox="0 0 22 18"><g fill="none" stroke="#54a9ff" stroke-width="2.5"><path d="M6.6 3.600 L1.8 9.1 L6.600 14.600"/><path d="M14.400 3.600 L19.2 9.1 L14.400 14.600"/><path d="M11.700 1.4 L9.3 16.800" stroke-width="2.1"/></g></svg>
<div class="b" style="left:472.10px;top:147.30px;width:6.80px;height:525.00px;background:#3e4247;border-radius:3.4px;"></div>
<div class="b" style="left:479.00px;top:147.00px;width:1.10px;height:755.00px;background:#26262b;border-radius:0.0px;"></div>
<div class="b" style="left:485.00px;top:463.00px;width:1.00px;height:125.00px;background:#2c2c31;border-radius:0.0px;"></div>
<div class="b" style="left:489.00px;top:463.00px;width:1.00px;height:125.00px;background:#2c2c31;border-radius:0.0px;"></div>
<div class="b" style="left:10.00px;top:209.20px;width:304.00px;height:39.70px;background:#323237;border-radius:4.0px;"></div>
<svg class="b" style="left:21.00px;top:219.00px;" width="20" height="20" viewBox="0 0 20 20"><g fill="none" stroke="#b6b6ba" stroke-width="2.8"><circle cx="8.900" cy="8.900" r="6"/><path d="M13.4 13.4 L17.700 17.700" stroke-linecap="round"/></g></svg>
<span class="t " style="left:66.10px;top:219.04px;height:24px;line-height:24px;font-size:17.50px;color:#a7a7ab;letter-spacing:-0.917px;">Search...</span>
<svg class="b" style="left:284.80px;top:224.20px;" width="16.4" height="9.4" viewBox="0 0 16.4 9.4"><path d="M1.20 1.20 L8.20 8.20 L15.20 1.20" fill="none" stroke="#b0b0b4" stroke-width="2.3"/></svg>
<div class="b" style="left:324.10px;top:209.20px;width:138.00px;height:39.70px;background:#2f3138;border-radius:4.0px;"></div>
<svg class="b" style="left:340.00px;top:220.00px;" width="18.4" height="18.4" viewBox="0 0 18.4 18.4"><path d="M0.9 9.2 H17.5 M9.2 0.9 V17.5" stroke="#54a9ff" stroke-width="2.2" fill="none"/></svg>
<span class="t " style="left:369.70px;top:219.04px;height:24px;line-height:24px;font-size:17.50px;color:#54a9ff;-webkit-text-stroke:0.60px #54a9ff;letter-spacing:0.431px;">Add table</span>
<div class="b" style="left:9.90px;top:253.75px;width:5.20px;height:52.50px;background:#32c9b0;border-radius:0.0px;"></div>
<svg class="b" style="left:34.20px;top:268.10px;" width="12" height="18" viewBox="0 0 12 18"><g fill="#8b8b90"><rect x="1.75" y="1.65" width="2.9" height="2.9" rx="0.9"/><rect x="1.75" y="7.55" width="2.9" height="2.9" rx="0.9"/><rect x="1.75" y="13.45" width="2.9" height="2.9" rx="0.9"/><rect x="7.35" y="1.65" width="2.9" height="2.9" rx="0.9"/><rect x="7.35" y="7.55" width="2.9" height="2.9" rx="0.9"/><rect x="7.35" y="13.45" width="2.9" height="2.9" rx="0.9"/></g></svg>
<span class="t " style="left:60.30px;top:267.74px;height:24px;line-height:24px;font-size:17.50px;color:#fafafa;-webkit-text-stroke:0.60px #fafafa;letter-spacing:0.383px;">products</span>
<svg class="b" style="left:423.70px;top:273.10px;" width="16.4" height="9.4" viewBox="0 0 16.4 9.4"><path d="M1.20 1.20 L8.20 8.20 L15.20 1.20" fill="none" stroke="#a8a8ac" stroke-width="2.3"/></svg>
<div class="b" style="left:9.90px;top:312.50px;width:5.20px;height:52.50px;background:#89e667;border-radius:0.0px;"></div>
<svg class="b" style="left:34.20px;top:325.85px;" width="12" height="18" viewBox="0 0 12 18"><g fill="#8b8b90"><rect x="1.75" y="1.65" width="2.9" height="2.9" rx="0.9"/><rect x="1.75" y="7.55" width="2.9" height="2.9" rx="0.9"/><rect x="1.75" y="13.45" width="2.9" height="2.9" rx="0.9"/><rect x="7.35" y="1.65" width="2.9" height="2.9" rx="0.9"/><rect x="7.35" y="7.55" width="2.9" height="2.9" rx="0.9"/><rect x="7.35" y="13.45" width="2.9" height="2.9" rx="0.9"/></g></svg>
<span class="t " style="left:60.30px;top:326.49px;height:24px;line-height:24px;font-size:17.50px;color:#fafafa;-webkit-text-stroke:0.60px #fafafa;letter-spacing:0.095px;">categories</span>
<svg class="b" style="left:423.70px;top:331.85px;" width="16.4" height="9.4" viewBox="0 0 16.4 9.4"><path d="M1.20 1.20 L8.20 8.20 L15.20 1.20" fill="none" stroke="#a8a8ac" stroke-width="2.3"/></svg>
<div class="b" style="left:9.90px;top:371.25px;width:5.20px;height:470.20px;background:#6360f7;border-radius:0.0px;"></div>
<svg class="b" style="left:34.20px;top:384.30px;" width="12" height="18" viewBox="0 0 12 18"><g fill="#8b8b90"><rect x="1.75" y="1.65" width="2.9" height="2.9" rx="0.9"/><rect x="1.75" y="7.55" width="2.9" height="2.9" rx="0.9"/><rect x="1.75" y="13.45" width="2.9" height="2.9" rx="0.9"/><rect x="7.35" y="1.65" width="2.9" height="2.9" rx="0.9"/><rect x="7.35" y="7.55" width="2.9" height="2.9" rx="0.9"/><rect x="7.35" y="13.45" width="2.9" height="2.9" rx="0.9"/></g></svg>
<span class="t " style="left:60.30px;top:385.24px;height:24px;line-height:24px;font-size:17.50px;color:#fafafa;-webkit-text-stroke:0.60px #fafafa;letter-spacing:0.219px;">orders</span>
<svg class="b" style="left:423.70px;top:390.60px;" width="16.4" height="9.4" viewBox="0 0 16.4 9.4"><path d="M1.20 8.20 L8.20 1.20 L15.20 8.20" fill="none" stroke="#a8a8ac" stroke-width="2.3"/></svg>
<div class="b" style="left:15.00px;top:306.60px;width:447.00px;height:1.20px;background:#2a2a2f;border-radius:0.0px;"></div>
<div class="b" style="left:15.00px;top:365.00px;width:447.00px;height:1.20px;background:#2a2a2f;border-radius:0.0px;"></div>
<span class="t " style="left:30.50px;top:437.94px;height:24px;line-height:24px;font-size:17.50px;color:#d2d2d5;-webkit-text-stroke:0.60px #d2d2d5;letter-spacing:-0.111px;">Name:</span>
<div class="b" style="left:92.20px;top:428.90px;width:350.30px;height:39.90px;background:#323237;border-radius:4.0px;"></div>
<span class="t " style="left:107.90px;top:437.94px;height:24px;line-height:24px;font-size:17.50px;color:#f2f2f4;letter-spacing:-0.101px;">orders</span>
<svg class="b" style="left:34.20px;top:490.95px;" width="12" height="18" viewBox="0 0 12 18"><g fill="#8b8b90"><rect x="1.75" y="1.65" width="2.9" height="2.9" rx="0.9"/><rect x="1.75" y="7.55" width="2.9" height="2.9" rx="0.9"/><rect x="1.75" y="13.45" width="2.9" height="2.9" rx="0.9"/><rect x="7.35" y="1.65" width="2.9" height="2.9" rx="0.9"/><rect x="7.35" y="7.55" width="2.9" height="2.9" rx="0.9"/><rect x="7.35" y="13.45" width="2.9" height="2.9" rx="0.9"/></g></svg>
<div class="b" style="left:60.00px;top:480.90px;width:104.10px;height:39.90px;background:#323237;border-radius:4.0px;"></div>
<span class="t " style="left:76.30px;top:490.69px;height:24px;line-height:24px;font-size:17.50px;color:#f2f2f4;letter-spacing:0.580px;">id</span>
<div class="b" style="left:174.20px;top:480.90px;width:119.90px;height:39.90px;background:#323237;border-radius:4.0px;"></div>
<span class="t " style="left:190.70px;top:490.69px;height:24px;line-height:24px;font-size:17.50px;color:#f2f2f4;letter-spacing:-1.045px;">INT</span>
<svg class="b" style="left:265.10px;top:496.65px;" width="15.8" height="9" viewBox="0 0 15.8 9"><path d="M1.20 1.20 L7.90 7.80 L14.60 1.20" fill="none" stroke="#a2a2a6" stroke-width="2.3"/></svg>
<div class="b" style="left:303.90px;top:480.90px;width:38.30px;height:39.90px;background:#2f3138;border-radius:4.0px;"></div>
<span class="t " style="left:319.30px;top:490.69px;height:24px;line-height:24px;font-size:17.50px;color:#d0d0d3;-webkit-text-stroke:0.60px #d0d0d3;letter-spacing:-1.733px;">?</span>
<div class="b" style="left:351.90px;top:480.90px;width:40.10px;height:39.90px;background:#54a9ff;border-radius:4.0px;"></div>
<svg class="b" style="left:362.00px;top:491.00px;" width="20" height="20" viewBox="0 0 20 20"><g fill="none" stroke="#ffffff" stroke-width="1.8" stroke-linejoin="round"><path d="M8.26 8.44 A4.7 4.7 0 1 1 11.38 11.56 L10.600 12.400 V13.600 H9.300 V14.900 H8 V16.200 H6.900 V17.800 H2.700 V13.700 Z"/><rect x="11.850" y="5.900" width="2.300" height="2.300" rx="0.600" fill="#ffffff" stroke="none"/></g></svg>
<div class="b" style="left:402.00px;top:480.90px;width:39.90px;height:39.90px;background:#2f3138;border-radius:4.0px;"></div>
<svg class="b" style="left:412.00px;top:497.85px;" width="20" height="6" viewBox="0 0 20 6"><g fill="#d0d0d3"><circle cx="3.600" cy="3.200" r="1.95"/><circle cx="10.2" cy="3.200" r="1.95"/><circle cx="16.700" cy="3.200" r="1.95"/></g></svg>
<svg class="b" style="left:34.20px;top:540.95px;" width="12" height="18" viewBox="0 0 12 18"><g fill="#8b8b90"><rect x="1.75" y="1.65" width="2.9" height="2.9" rx="0.9"/><rect x="1.75" y="7.55" width="2.9" height="2.9" rx="0.9"/><rect x="1.75" y="13.45" width="2.9" height="2.9" rx="0.9"/><rect x="7.35" y="1.65" width="2.9" height="2.9" rx="0.9"/><rect x="7.35" y="7.55" width="2.9" height="2.9" rx="0.9"/><rect x="7.35" y="13.45" width="2.9" height="2.9" rx="0.9"/></g></svg>
<div class="b" style="left:60.00px;top:530.90px;width:104.10px;height:39.90px;background:#323237;border-radius:4.0px;"></div>
<span class="t " style="left:76.30px;top:540.69px;height:24px;line-height:24px;font-size:17.50px;color:#f2f2f4;letter-spacing:0.180px;">date</span>
<div class="b" style="left:174.20px;top:530.90px;width:119.90px;height:39.90px;background:#323237;border-radius:4.0px;"></div>
<span class="t " style="left:190.70px;top:540.69px;height:24px;line-height:24px;font-size:17.50px;color:#f2f2f4;letter-spacing:-1.058px;">DATET...</span>
<svg class="b" style="left:265.10px;top:546.65px;" width="15.8" height="9" viewBox="0 0 15.8 9"><path d="M1.20 1.20 L7.90 7.80 L14.60 1.20" fill="none" stroke="#a2a2a6" stroke-width="2.3"/></svg>
<div class="b" style="left:303.90px;top:530.90px;width:38.30px;height:39.90px;background:#54a9ff;border-radius:4.0px;"></div>
<span class="t " style="left:319.30px;top:540.69px;height:24px;line-height:24px;font-size:17.50px;color:#ffffff;-webkit-text-stroke:0.60px #ffffff;letter-spacing:-1.733px;">?</span>
<div class="b" style="left:351.90px;top:530.90px;width:40.10px;height:39.90px;background:#2f3138;border-radius:4.0px;"></div>
<svg class="b" style="left:362.00px;top:541.00px;" width="20" height="20" viewBox="0 0 20 20"><g fill="none" stroke="#d0d0d3" stroke-width="1.8" stroke-linejoin="round"><path d="M8.26 8.44 A4.7 4.7 0 1 1 11.38 11.56 L10.600 12.400 V13.600 H9.300 V14.900 H8 V16.200 H6.900 V17.800 H2.700 V13.700 Z"/><rect x="11.850" y="5.900" width="2.300" height="2.300" rx="0.600" fill="#d0d0d3" stroke="none"/></g></svg>
<div class="b" style="left:402.00px;top:530.90px;width:39.90px;height:39.90px;background:#2f3138;border-radius:4.0px;"></div>
<svg class="b" style="left:412.00px;top:547.85px;" width="20" height="6" viewBox="0 0 20 6"><g fill="#d0d0d3"><circle cx="3.600" cy="3.200" r="1.95"/><circle cx="10.2" cy="3.200" r="1.95"/><circle cx="16.700" cy="3.200" r="1.95"/></g></svg>
<svg class="b" style="left:34.20px;top:590.95px;" width="12" height="18" viewBox="0 0 12 18"><g fill="#8b8b90"><rect x="1.75" y="1.65" width="2.9" height="2.9" rx="0.9"/><rect x="1.75" y="7.55" width="2.9" height="2.9" rx="0.9"/><rect x="1.75" y="13.45" width="2.9" height="2.9" rx="0.9"/><rect x="7.35" y="1.65" width="2.9" height="2.9" rx="0.9"/><rect x="7.35" y="7.55" width="2.9" height="2.9" rx="0.9"/><rect x="7.35" y="13.45" width="2.9" height="2.9" rx="0.9"/></g></svg>
<div class="b" style="left:60.00px;top:580.90px;width:104.10px;height:39.90px;background:#323237;border-radius:4.0px;"></div>
<span class="t " style="left:76.30px;top:590.69px;height:24px;line-height:24px;font-size:17.50px;color:#f2f2f4;letter-spacing:-0.081px;">customer</span>
<div class="b" style="left:174.20px;top:580.90px;width:119.90px;height:39.90px;background:#323237;border-radius:4.0px;"></div>
<span class="t " style="left:190.70px;top:590.69px;height:24px;line-height:24px;font-size:17.50px;color:#f2f2f4;letter-spacing:-1.045px;">INT</span>
<svg class="b" style="left:265.10px;top:596.65px;" width="15.8" height="9" viewBox="0 0 15.8 9"><path d="M1.20 1.20 L7.90 7.80 L14.60 1.20" fill="none" stroke="#a2a2a6" stroke-width="2.3"/></svg>
<div class="b" style="left:303.90px;top:580.90px;width:38.30px;height:39.90px;background:#54a9ff;border-radius:4.0px;"></div>
<span class="t " style="left:319.30px;top:590.69px;height:24px;line-height:24px;font-size:17.50px;color:#ffffff;-webkit-text-stroke:0.60px #ffffff;letter-spacing:-1.733px;">?</span>
<div class="b" style="left:351.90px;top:580.90px;width:40.10px;height:39.90px;background:#2f3138;border-radius:4.0px;"></div>
<svg class="b" style="left:362.00px;top:591.00px;" width="20" height="20" viewBox="0 0 20 20"><g fill="none" stroke="#d0d0d3" stroke-width="1.8" stroke-linejoin="round"><path d="M8.26 8.44 A4.7 4.7 0 1 1 11.38 11.56 L10.600 12.400 V13.600 H9.300 V14.900 H8 V16.200 H6.900 V17.800 H2.700 V13.700 Z"/><rect x="11.850" y="5.900" width="2.300" height="2.300" rx="0.600" fill="#d0d0d3" stroke="none"/></g></svg>
<div class="b" style="left:402.00px;top:580.90px;width:39.90px;height:39.90px;background:#2f3138;border-radius:4.0px;"></div>
<svg class="b" style="left:412.00px;top:597.85px;" width="20" height="6" viewBox="0 0 20 6"><g fill="#d0d0d3"><circle cx="3.600" cy="3.200" r="1.95"/><circle cx="10.2" cy="3.200" r="1.95"/><circle cx="16.700" cy="3.200" r="1.95"/></g></svg>
<svg class="b" style="left:34.20px;top:640.95px;" width="12" height="18" viewBox="0 0 12 18"><g fill="#8b8b90"><rect x="1.75" y="1.65" width="2.9" height="2.9" rx="0.9"/><rect x="1.75" y="7.55" width="2.9" height="2.9" rx="0.9"/><rect x="1.75" y="13.45" width="2.9" height="2.9" rx="0.9"/><rect x="7.35" y="1.65" width="2.9" height="2.9" rx="0.9"/><rect x="7.35" y="7.55" width="2.9" height="2.9" rx="0.9"/><rect x="7.35" y="13.45" width="2.9" height="2.9" rx="0.9"/></g></svg>
<div class="b" style="left:60.00px;top:630.90px;width:104.10px;height:39.90px;background:#323237;border-radius:4.0px;"></div>
<span class="t " style="left:76.30px;top:640.69px;height:24px;line-height:24px;font-size:17.50px;color:#f2f2f4;letter-spacing:0.246px;">amount</span>
<div class="b" style="left:174.20px;top:630.90px;width:119.90px;height:39.90px;background:#323237;border-radius:4.0px;"></div>
<span class="t " style="left:190.70px;top:640.69px;height:24px;line-height:24px;font-size:17.50px;color:#f2f2f4;letter-spacing:-1.045px;">INT</span>
<svg class="b" style="left:265.10px;top:646.65px;" width="15.8" height="9" viewBox="0 0 15.8 9"><path d="M1.20 1.20 L7.90 7.80 L14.60 1.20" fill="none" stroke="#a2a2a6" stroke-width="2.3"/></svg>
<div class="b" style="left:303.90px;top:630.90px;width:38.30px;height:39.90px;background:#54a9ff;border-radius:4.0px;"></div>
<span class="t " style="left:319.30px;top:640.69px;height:24px;line-height:24px;font-size:17.50px;color:#ffffff;-webkit-text-stroke:0.60px #ffffff;letter-spacing:-1.733px;">?</span>
<div class="b" style="left:351.90px;top:630.90px;width:40.10px;height:39.90px;background:#2f3138;border-radius:4.0px;"></div>
<svg class="b" style="left:362.00px;top:641.00px;" width="20" height="20" viewBox="0 0 20 20"><g fill="none" stroke="#d0d0d3" stroke-width="1.8" stroke-linejoin="round"><path d="M8.26 8.44 A4.7 4.7 0 1 1 11.38 11.56 L10.600 12.400 V13.600 H9.300 V14.900 H8 V16.200 H6.900 V17.800 H2.700 V13.700 Z"/><rect x="11.850" y="5.900" width="2.300" height="2.300" rx="0.600" fill="#d0d0d3" stroke="none"/></g></svg>
<div class="b" style="left:402.00px;top:630.90px;width:39.90px;height:39.90px;background:#2f3138;border-radius:4.0px;"></div>
<svg class="b" style="left:412.00px;top:647.85px;" width="20" height="6" viewBox="0 0 20 6"><g fill="#d0d0d3"><circle cx="3.600" cy="3.200" r="1.95"/><circle cx="10.2" cy="3.200" r="1.95"/><circle cx="16.700" cy="3.200" r="1.95"/></g></svg>
<svg class="b" style="left:34.20px;top:690.95px;" width="12" height="18" viewBox="0 0 12 18"><g fill="#8b8b90"><rect x="1.75" y="1.65" width="2.9" height="2.9" rx="0.9"/><rect x="1.75" y="7.55" width="2.9" height="2.9" rx="0.9"/><rect x="1.75" y="13.45" width="2.9" height="2.9" rx="0.9"/><rect x="7.35" y="1.65" width="2.9" height="2.9" rx="0.9"/><rect x="7.35" y="7.55" width="2.9" height="2.9" rx="0.9"/><rect x="7.35" y="13.45" width="2.9" height="2.9" rx="0.9"/></g></svg>
<div class="b" style="left:60.00px;top:680.90px;width:104.10px;height:39.90px;background:#323237;border-radius:4.0px;"></div>
<span class="t " style="left:76.30px;top:690.69px;height:24px;line-height:24px;font-size:17.50px;color:#f2f2f4;letter-spacing:-0.338px;">status</span>
<div class="b" style="left:174.20px;top:680.90px;width:119.90px;height:39.90px;background:#323237;border-radius:4.0px;"></div>
<span class="t " style="left:190.70px;top:690.69px;height:24px;line-height:24px;font-size:17.50px;color:#f2f2f4;letter-spacing:-0.775px;">ENUM</span>
<svg class="b" style="left:265.10px;top:696.65px;" width="15.8" height="9" viewBox="0 0 15.8 9"><path d="M1.20 1.20 L7.90 7.80 L14.60 1.20" fill="none" stroke="#a2a2a6" stroke-width="2.3"/></svg>
<div class="b" style="left:303.90px;top:680.90px;width:38.30px;height:39.90px;background:#54a9ff;border-radius:4.0px;"></div>
<span class="t " style="left:319.30px;top:690.69px;height:24px;line-height:24px;font-size:17.50px;color:#ffffff;-webkit-text-stroke:0.60px #ffffff;letter-spacing:-1.733px;">?</span>
<div class="b" style="left:351.90px;top:680.90px;width:40.10px;height:39.90px;background:#2f3138;border-radius:4.0px;"></div>
<svg class="b" style="left:362.00px;top:691.00px;" width="20" height="20" viewBox="0 0 20 20"><g fill="none" stroke="#d0d0d3" stroke-width="1.8" stroke-linejoin="round"><path d="M8.26 8.44 A4.7 4.7 0 1 1 11.38 11.56 L10.600 12.400 V13.600 H9.300 V14.900 H8 V16.200 H6.900 V17.800 H2.700 V13.700 Z"/><rect x="11.850" y="5.900" width="2.300" height="2.300" rx="0.600" fill="#d0d0d3" stroke="none"/></g></svg>
<div class="b" style="left:402.00px;top:680.90px;width:39.90px;height:39.90px;background:#2f3138;border-radius:4.0px;"></div>
<svg class="b" style="left:412.00px;top:697.85px;" width="20" height="6" viewBox="0 0 20 6"><g fill="#d0d0d3"><circle cx="3.600" cy="3.200" r="1.95"/><circle cx="10.2" cy="3.200" r="1.95"/><circle cx="16.700" cy="3.200" r="1.95"/></g></svg>
<svg class="b" style="left:34.20px;top:740.95px;" width="12" height="18" viewBox="0 0 12 18"><g fill="#8b8b90"><rect x="1.75" y="1.65" width="2.9" height="2.9" rx="0.9"/><rect x="1.75" y="7.55" width="2.9" height="2.9" rx="0.9"/><rect x="1.75" y="13.45" width="2.9" height="2.9" rx="0.9"/><rect x="7.35" y="1.65" width="2.9" height="2.9" rx="0.9"/><rect x="7.35" y="7.55" width="2.9" height="2.9" rx="0.9"/><rect x="7.35" y="13.45" width="2.9" height="2.9" rx="0.9"/></g></svg>
<div class="b" style="left:60.00px;top:730.90px;width:104.10px;height:39.90px;background:#323237;border-radius:4.0px;"></div>
<span class="t " style="left:76.30px;top:740.69px;height:24px;line-height:24px;font-size:17.50px;color:#f2f2f4;letter-spacing:0.013px;">product_i</span>
<div class="b" style="left:174.20px;top:730.90px;width:119.90px;height:39.90px;background:#323237;border-radius:4.0px;"></div>
<span class="t " style="left:190.70px;top:740.69px;height:24px;line-height:24px;font-size:17.50px;color:#f2f2f4;letter-spacing:-1.045px;">INT</span>
<svg class="b" style="left:265.10px;top:746.65px;" width="15.8" height="9" viewBox="0 0 15.8 9"><path d="M1.20 1.20 L7.90 7.80 L14.60 1.20" fill="none" stroke="#a2a2a6" stroke-width="2.3"/></svg>
<div class="b" style="left:303.90px;top:730.90px;width:38.30px;height:39.90px;background:#54a9ff;border-radius:4.0px;"></div>
<span class="t " style="left:319.30px;top:740.69px;height:24px;line-height:24px;font-size:17.50px;color:#ffffff;-webkit-text-stroke:0.60px #ffffff;letter-spacing:-1.733px;">?</span>
<div class="b" style="left:351.90px;top:730.90px;width:40.10px;height:39.90px;background:#2f3138;border-radius:4.0px;"></div>
<svg class="b" style="left:362.00px;top:741.00px;" width="20" height="20" viewBox="0 0 20 20"><g fill="none" stroke="#d0d0d3" stroke-width="1.8" stroke-linejoin="round"><path d="M8.26 8.44 A4.7 4.7 0 1 1 11.38 11.56 L10.600 12.400 V13.600 H9.300 V14.900 H8 V16.200 H6.900 V17.800 H2.700 V13.700 Z"/><rect x="11.850" y="5.900" width="2.300" height="2.300" rx="0.600" fill="#d0d0d3" stroke="none"/></g></svg>
<div class="b" style="left:402.00px;top:730.90px;width:39.90px;height:39.90px;background:#2f3138;border-radius:4.0px;"></div>
<svg class="b" style="left:412.00px;top:747.85px;" width="20" height="6" viewBox="0 0 20 6"><g fill="#d0d0d3"><circle cx="3.600" cy="3.200" r="1.95"/><circle cx="10.2" cy="3.200" r="1.95"/><circle cx="16.700" cy="3.200" r="1.95"/></g></svg>
<div class="b" style="left:30.2px;top:786px;width:411.6px;height:70px;border:1.2px solid #2a2a2f;border-radius:7px;"></div>
<span class="t " style="left:56.10px;top:809.14px;height:24px;line-height:24px;font-size:17.50px;color:#fafafa;-webkit-text-stroke:0.60px #fafafa;letter-spacing:0.358px;">Comment</span>
<svg class="b" style="left:397.80px;top:815.30px;" width="16.4" height="9.4" viewBox="0 0 16.4 9.4"><path d="M1.20 1.20 L8.20 8.20 L15.20 1.20" fill="none" stroke="#a8a8ac" stroke-width="2.3"/></svg>
<div class="b" style="left:0.00px;top:841.00px;width:479.00px;height:61.00px;background:#16161a;border-radius:0.0px;"></div>
<div class="b" style="left:0.00px;top:841.00px;width:479.00px;height:1.50px;background:#313237;border-radius:0.0px;"></div>
<svg class="b" style="left:19.20px;top:867.50px;" width="20" height="17" viewBox="0 0 20 17"><path d="M10 2.300 L17.800 15.200 H2.200 Z" fill="#f5b100" stroke="#f5b100" stroke-width="2.6" stroke-linejoin="round"/><path d="M10 6 V11.2" stroke="#16161a" stroke-width="2"/><circle cx="10" cy="13.700" r="1.150" fill="#16161a"/></svg>
<span class="t " style="left:48.20px;top:864.64px;height:24px;line-height:24px;font-size:17.50px;color:#fafafa;-webkit-text-stroke:0.60px #fafafa;letter-spacing:-0.776px;">Issues</span>
<div class="b" style="left:99.50px;top:853.20px;width:20.60px;height:20.60px;background:#54a9ff;border-radius:10.3px;"></div>
<span class="t " style="left:105.40px;top:852.83px;height:22px;line-height:22px;font-size:15.50px;color:#2a4f80;">0</span>
<svg class="b" style="left:440.80px;top:868.10px;" width="16.4" height="9.4" viewBox="0 0 16.4 9.4"><path d="M1.20 1.20 L8.20 8.20 L15.20 1.20" fill="none" stroke="#a8a8ac" stroke-width="2.3"/></svg>
</aside>
</body></html>
